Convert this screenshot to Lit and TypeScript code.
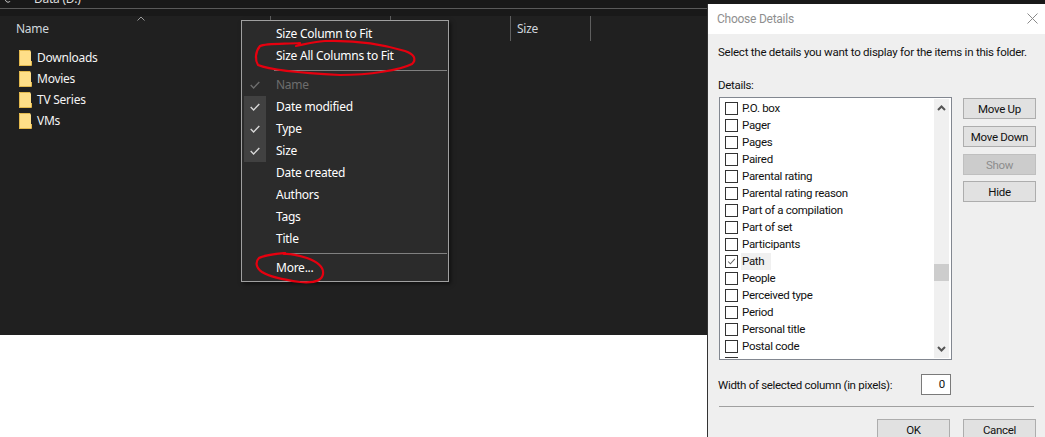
import { LitElement, html, css, svg } from "lit";
import { customElement } from "lit/decorators.js";

const menu = [
  { t: "Name", on: true, dis: true },
  { t: "Date modified", on: true },
  { t: "Type", on: true },
  { t: "Size", on: true },
  { t: "Date created" },
  { t: "Authors" },
  { t: "Tags" },
  { t: "Title" },
];
const details = [
  "P.O. box","Pager","Pages","Paired","Parental rating","Parental rating reason","Part of a compilation","Part of set","Participants","Path","People","Perceived type","Period","Personal title","Postal code",
];

@customElement("app-root")
export class AppRoot extends LitElement {
  static styles = css`
    :host { display: block; width: 1045px; height: 437px; overflow: hidden; background: #fff; position: relative; font-family: "Noto Sans", "Open Sans", sans-serif; font-size: 12px; letter-spacing: -0.25px; }
    .explorer { height: 335px; background: #202020; display: flex; flex-direction: column; color: #fff; }
    .title { height: 8px; background: #191919; overflow: hidden; display: flex; align-items: flex-start; padding-left: 5px; color: #ddd; }
    .title svg { display: block; flex: none; margin-right: 19px; }
    .title span { line-height: 8px; margin-top: -5px; }
    .rule { height: 1px; background: #5a5a5a; }
    .band { height: 7px; background: #191919; }
    .head { height: 25px; display: flex; position: relative; color: #cfd6dc; line-height: 25px; }
    .col { border-right: 1px solid #5f5f5f; padding-left: 6px; box-sizing: border-box; height: 25px; flex: none; }
    .col.name { width: 271px; padding-left: 16px; }
    .col.a, .col.b { width: 120px; }
    .col.c { width: 80px; }
    .caret { position: absolute; left: 137px; top: 0; }
    .rows { padding-top: 6px; padding-left: 19px; display: flex; flex-direction: column; }
    .row { height: 21px; display: flex; align-items: center; gap: 5px; color: #f4f4f4; }
    .folder { width: 13px; height: 16px; flex: none; display: block; }
    .menu { position: absolute; left: 241px; top: 20px; width: 208px; height: 262px; box-sizing: border-box; border: 1px solid #a0a0a0; background: #2b2b2b; color: #fff; padding: 2px 2px; box-shadow: 2px 2px 4px rgba(0,0,0,.5); }
    .mi { height: 22px; line-height: 21px; display: flex; }
    .chk { width: 22px; height: 22px; margin-right: 10px; flex: none; display: flex; align-items: center; justify-content: center; }
    .chk.bg { background: #414141; }
    .mi.dis { color: #6d6d6d; }
    .mi.dis .chk svg { stroke: #6d6d6d; }
    .chk svg { stroke: #d8d8d8; fill: none; width: 10px; height: 8px; display: block; }
    .sep { height: 1px; background: #808080; margin: 3px 0 3px 30px; width: 173px; }
    .dlg { position: absolute; left: 707px; top: 4px; width: 338px; height: 433px; box-sizing: border-box; border-left: 1px solid #333; background: #efefef; color: #111; display: flex; flex-direction: column; font-family: Roboto, "Noto Sans", sans-serif; font-size: 11.5px; letter-spacing: -0.3px; }
    .dtitle { height: 30px; background: #fff; display: flex; align-items: center; justify-content: space-between; padding: 0 7px 0 9px; color: #8f8f8f; flex: none; font-size: 12px; letter-spacing: -0.25px; }
    .x { width: 11px; height: 11px; display: block; stroke: #8a8a8a; fill: none; margin-top: -2px; }
    .dbody { padding: 8px 9px 0 10px; display: flex; flex-direction: column; }
    .lead { height: 20px; line-height: 20px; white-space: nowrap; letter-spacing: -0.24px; }
    .dlabel { height: 20px; line-height: 20px; margin-top: 13px; }
    .main { display: flex; align-items: flex-start; margin-top: 2px; padding-left: 1px; }
    .list { width: 233px; height: 263px; box-sizing: border-box; border: 1px solid #828790; background: #fff; display: flex; overflow: hidden; flex: none; }
    .items { flex: 1; padding: 2px 0 0 5px; overflow: hidden; height: 258px; }
    .item { height: 17px; display: flex; align-items: center; gap: 4px; }
    .cb { width: 13px; height: 13px; border: 1px solid #333; background: #fff; box-sizing: border-box; flex: none; display: block; }
    .item span { padding: 0 2px 0 0; line-height: 17px; }
    .item.sel span { background: #f0f0f0; padding: 0 7px 0 1px; margin-left: -1px; }
    .sb { width: 15px; height: 259px; margin: 1px 2px 0 0; background: #f0f0f0; display: flex; flex-direction: column; justify-content: space-between; align-items: center; position: relative; flex: none; }
    .sb svg { display: block; width: 9px; height: 6px; margin: 6px 0; fill: none; stroke: #555; stroke-width: 2; }
    .thumb { position: absolute; left: 0; top: 165px; width: 15px; height: 17px; background: #cdcdcd; }
    .btns { margin: 1px 0 0 11px; display: flex; flex-direction: column; gap: 7px; }
    .btn { width: 73px; height: 21px; box-sizing: border-box; border: 1px solid #adadad; background: #e1e1e1; color: #111; display: flex; align-items: center; justify-content: center; flex: none; }
    .btn.dim { color: #8c8c8c; background: #ccc; border-color: #bfbfbf; margin-bottom: -1px; }
    .wrow { display: flex; align-items: center; justify-content: space-between; width: 233px; margin-top: 14px; height: 21px; }
    .num { width: 30px; height: 21px; box-sizing: border-box; border: 1px solid #7a7a7a; background: #fff; text-align: right; padding-right: 5px; line-height: 19px; }
    .hr { height: 1px; background: #a0a0a0; margin: 11px 0 0 1px; width: 315px; }
    .foot { display: flex; gap: 13px; justify-content: flex-end; margin-top: 12px; }
    .ink { position: absolute; left: 0; top: 0; width: 1045px; height: 437px; pointer-events: none; fill: none; stroke: #e6000f; stroke-width: 2.2; stroke-linecap: round; stroke-linejoin: round; }
  `;

  check() {
    return html`<svg viewBox="0 0 10 8"><path d="M.7 4 3.6 6.9 9.3 1.1" stroke-width="1.4"/></svg>`;
  }
  folder() {
    return html`<svg class="folder" viewBox="0 0 13 16"><path d="M0 0h11l1 2v14H0z" fill="#ffdf88"/><path d="M.5 16V.5h10.5M0 15.5h12.5V11" stroke="#e3b94d" fill="none"/></svg>`;
  }

  render() {
    return html`
      <div class="explorer">
        <div class="title">
          <svg width="10" height="8" viewBox="0 0 10 8"><path d="M.5 0C1 2.4 4 2.8 5 1.2" fill="none" stroke="#ddd"/></svg>
          <span>Data (D:)</span>
        </div>
        <div class="rule"></div>
        <div class="band"></div>
        <div class="head">
          <div class="col name">Name</div>
          <div class="col a"></div>
          <div class="col b"></div>
          <div class="col c">Size</div>
          <svg class="caret" width="8" height="5" viewBox="0 0 8 5"><path d="M.5 4.5 4 1 7.5 4.5" fill="none" stroke="#9a9a9a"/></svg>
        </div>
        <div class="rows">
          ${["Downloads", "Movies", "TV Series", "VMs"].map((n) => html`<div class="row">${this.folder()}<span>${n}</span></div>`)}
        </div>
      </div>

      <div class="menu">
        <div class="mi"><span class="chk"></span>Size Column to Fit</div>
        <div class="mi"><span class="chk"></span>Size All Columns to Fit</div>
        <div class="sep"></div>
        ${menu.map((m) => html`<div class="mi ${m.dis ? "dis" : ""}"><span class="chk ${m.on && !m.dis ? "bg" : ""}">${m.on ? this.check() : ""}</span>${m.t}</div>`)}
        <div class="sep"></div>
        <div class="mi"><span class="chk"></span>More...</div>
      </div>

      <div class="dlg">
        <div class="dtitle"><span>Choose Details</span><svg class="x" viewBox="0 0 11 11"><path d="M.5.5l10 10M10.5.5l-10 10"/></svg></div>
        <div class="dbody">
          <div class="lead">Select the details you want to display for the items in this folder.</div>
          <div class="dlabel">Details:</div>
          <div class="main">
            <div class="list">
              <div class="items">
                ${details.map((d) => html`<div class="item ${d === "Path" ? "sel" : ""}">
                  ${d === "Path"
                    ? html`<svg class="cb" viewBox="0 0 13 13"><path d="M2.5 6.5 5.2 9.2 10.5 3.5" fill="none" stroke="#666" stroke-width="1.2"/></svg>`
                    : html`<i class="cb"></i>`}
                  <span>${d}</span></div>`)}
                <div class="item"><i class="cb"></i></div>
              </div>
              <div class="sb">
                <svg viewBox="0 0 9 6"><path d="M1 5 4.5 1.5 8 5"/></svg>
                <div class="thumb"></div>
                <svg viewBox="0 0 9 6"><path d="M1 1 4.5 4.5 8 1"/></svg>
              </div>
            </div>
            <div class="btns">
              <div class="btn">Move Up</div>
              <div class="btn">Move Down</div>
              <div class="btn dim">Show</div>
              <div class="btn">Hide</div>
            </div>
          </div>
          <div class="wrow"><span>Width of selected column (in pixels):</span><div class="num">0</div></div>
          <div class="hr"></div>
          <div class="foot"><div class="btn">OK</div><div class="btn">Cancel</div></div>
        </div>
      </div>

      <svg class="ink" viewBox="0 0 1045 437">
        ${svg`<path d="M300 43C285 44 266 43 260 46 255 52 255 60 258 65 270 70 300 73 340 75 370 75 400 70 412 64 417 59 414 54 405 51 385 45 355 40 325 41 312 42 302 45 296 46"/>`}
        ${svg`<path d="M285 253C275 254 264 255 259 258 255 262 256 268 262 272 270 277 285 280 300 282 312 283 322 281 323 274 324 267 318 262 307 258 297 255 290 253 284 254"/>`}
      </svg>
    `;
  }
}
